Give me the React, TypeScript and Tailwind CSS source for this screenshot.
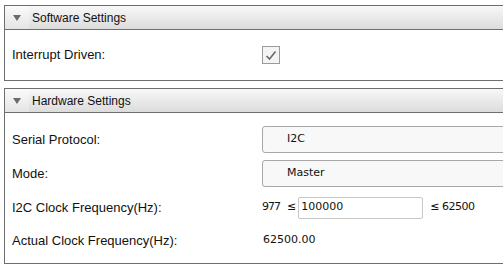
const Arrow = () => (
  <svg width="8" height="6" viewBox="0 0 8 6" className="block">
    <path d="M0 0 L8 0 L4 6 Z" fill="#6b6b6b" />
  </svg>
);

const PanelHeader = ({ title }: { title: string }) => (
  <div className="flex h-[24px] border-b border-[#6e6e6e] bg-gradient-to-b from-[#f8f8f8] to-[#dcdcdc]">
    <div className="flex w-[24px] items-center justify-center bg-gradient-to-b from-[#fbfbfb] to-[#e4e4e4]">
      <Arrow />
    </div>
    <span className="ml-[3px] self-center text-[12px] text-[#111]">{title}</span>
  </div>
);

const Select = ({ value }: { value: string }) => (
  <div className="flex h-[27px] w-[260px] items-center rounded-[3px] border border-[#a8a8a8] bg-[#f8f8f8] pl-[24px] font-['DejaVu_Sans',sans-serif] text-[11px] text-[#111]">
    {value}
  </div>
);

const Row = ({
  label,
  className,
  children,
}: {
  label: string;
  className: string;
  children: React.ReactNode;
}) => (
  <div className={`flex items-center ${className}`}>
    <span className="w-[250px] shrink-0 text-[13px] text-[#111]">{label}</span>
    {children}
  </div>
);

export default function App() {
  return (
    <div className="h-[267px] w-[503px] overflow-hidden bg-white pl-[4px] pt-[5px] font-['Liberation_Sans',Arial,sans-serif]">
      <div className="w-[520px] border-y border-l border-[#6e6e6e]">
        <PanelHeader title="Software Settings" />
        <div className="h-[50px] pl-[7px]">
          <Row label="Interrupt Driven:" className="h-[50px]">
            <div className="flex h-[18px] w-[18px] items-center justify-center border border-[#9a9a9a] bg-[#f4f4f4]">
              <svg width="12" height="11" viewBox="0 0 12 11">
                <path d="M1.5 6 L4.5 9 L10.5 1.5" fill="none" stroke="#6a6a6a" strokeWidth="1.6" />
              </svg>
            </div>
          </Row>
        </div>
      </div>

      <div className="mt-[7px] w-[520px] border-y border-l border-[#6e6e6e]">
        <PanelHeader title="Hardware Settings" />
        <div className="h-[150px] pl-[7px] pt-[13px]">
          <Row label="Serial Protocol:" className="h-[27px]">
            <Select value="I2C" />
          </Row>
          <Row label="Mode:" className="mt-[7px] h-[27px]">
            <Select value="Master" />
          </Row>
          <Row label="I2C Clock Frequency(Hz):" className="mt-[7px] h-[27px]">
            <div className="flex items-center font-['DejaVu_Sans',sans-serif] text-[11px] text-[#111]">
              <span className="tracking-[-1px]">977</span>
              <span className="ml-[7px]">≤</span>
              <div className="ml-[2px] flex h-[22px] w-[125px] items-center rounded-[2px] border border-[#c8c8c8] bg-white pl-[2px]">
                100000
              </div>
              <span className="ml-[7px] tracking-[-0.5px]">≤ 62500</span>
            </div>
          </Row>
          <Row label="Actual Clock Frequency(Hz):" className="mt-[6px] h-[27px]">
            <span className="ml-[1px] font-['DejaVu_Sans',sans-serif] text-[11px] text-[#111]">
              62500.00
            </span>
          </Row>
        </div>
      </div>
    </div>
  );
}
